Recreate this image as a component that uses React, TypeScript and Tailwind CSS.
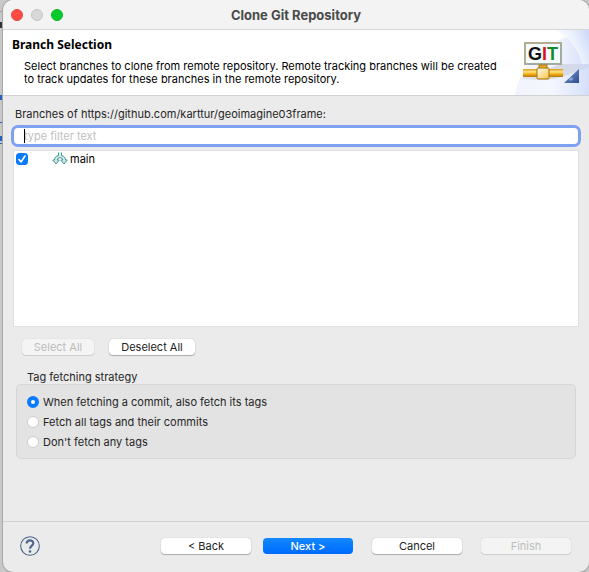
import { useState, type ReactNode } from "react";

function Backdrop() {
  return (
    <svg className="absolute inset-0 h-full w-full" aria-hidden="true">
      <rect width="100%" height="100%" fill="#c8c8c8" />
      <rect x="13" width="10" height="2" fill="#2b4a94" />
      <rect x="43" width="9" height="2" fill="#b03040" />
      <rect x="71" width="14" height="2" fill="#c9a13c" />
      <rect x="95" width="9" height="2" fill="#c9a13c" />
      <rect x="562" width="11" height="1" fill="#555555" />
      <rect y="11" width="3" height="1" fill="#999999" />
      <rect y="22" width="2" height="6" fill="#333333" />
      <rect y="95" width="2" height="5" fill="#2a5fc0" />
      <rect y="122" width="3" height="1" fill="#2a5fc0" />
      <rect y="136" width="2" height="5" fill="#2a5fc0" />
      <rect y="143" width="3" height="1" fill="#2a5fc0" />
    </svg>
  );
}

function GitBanner() {
  return (
    <svg width="76" height="65" viewBox="0 0 76 65" className="shrink-0" aria-label="Git" role="img">
      <defs>
        <linearGradient id="glow" x1="0" y1="0.4" x2="1" y2="0">
          <stop offset="0" stopColor="#ffffff" />
          <stop offset="0.5" stopColor="#eef2fd" />
          <stop offset="1" stopColor="#ccd8f9" />
        </linearGradient>
        <linearGradient id="glowLow" x1="0" y1="0" x2="1" y2="0">
          <stop offset="0" stopColor="#f1f4fd" />
          <stop offset="0.5" stopColor="#f5f7fe" />
          <stop offset="1" stopColor="#d5dffa" />
        </linearGradient>
        <linearGradient id="shade" x1="0" y1="0" x2="1" y2="0">
          <stop offset="0" stopColor="#e2e3e8" />
          <stop offset="0.5" stopColor="#d2d4dc" />
          <stop offset="1" stopColor="#cfd8ef" />
        </linearGradient>
        <linearGradient id="pipe" x1="0" y1="0" x2="0" y2="1">
          <stop offset="0" stopColor="#d79a10" />
          <stop offset="0.35" stopColor="#ffe48a" />
          <stop offset="0.6" stopColor="#f2b51c" />
          <stop offset="1" stopColor="#b87606" />
        </linearGradient>
        <linearGradient id="node" x1="0" y1="0" x2="1" y2="1">
          <stop offset="0" stopColor="#fffdf0" />
          <stop offset="1" stopColor="#f5c444" />
        </linearGradient>
        <linearGradient id="corner" x1="0" y1="0" x2="1" y2="1">
          <stop offset="0" stopColor="#7d9bd0" />
          <stop offset="1" stopColor="#2c4c91" />
        </linearGradient>
      </defs>
      <path d="M2 65C6 40 26 10 76 0V65Z" fill="url(#glowLow)" />
      <path d="M42 0C58 8 66 20 69 34H76V0Z" fill="url(#glow)" />
      <path d="M6 49L48 34H76V37C62 42 45 50 28 50Z" fill="url(#shade)" opacity="0.8" />
      <rect x="12" y="13" width="36" height="21" fill="#f5faff" stroke="#b3ad90" strokeWidth="2" />
      <path d="M12 34H48V14" fill="none" stroke="#8faab3" strokeWidth="1" />
      <text
        x="30"
        y="30"
        textAnchor="middle"
        fontFamily="Liberation Sans, Arial, sans-serif"
        fontSize="18"
        fontWeight="700"
      >
        <tspan fill="#111111">G</tspan>
        <tspan fill="#d8131b">I</tspan>
        <tspan fill="#15882a">T</tspan>
      </text>
      <rect x="26" y="35" width="8" height="4" fill="#e5ac25" stroke="#ad7510" strokeWidth="1" />
      <rect x="10" y="39" width="40" height="8" fill="url(#pipe)" />
      <rect x="24" y="38" width="12" height="11" rx="1" fill="url(#node)" stroke="#aa700c" strokeWidth="1" />
      <path d="M66 39V53H51Z" fill="url(#corner)" />
      <path d="M58 51V47M56 50L60 48M60 50L56 48" stroke="#9fb6e0" strokeWidth="0.7" />
    </svg>
  );
}

function BranchIcon() {
  return (
    <svg width="16" height="14" viewBox="0 0 16 14" fill="none" aria-hidden="true">
      <path
        d="M6.500 0.500V3.500C4 4 2.500 5.500 2.500 8H0.800L4 12L7.200 8H5.300C5.300 6.500 6.500 5.700 8 5.700C9.500 5.700 10.700 6.500 10.700 8H8.800L12 12L15.200 8H13.500C13.500 5.500 12 4 9.500 3.500V0.500"
        fill="#c9ebe7"
        stroke="#4a9498"
        strokeWidth="1"
        strokeLinejoin="round"
      />
      <path d="M8 0.500V4.500" stroke="#eafaf8" strokeWidth="1" />
    </svg>
  );
}

type Variant = "normal" | "primary" | "disabled";

const variants: Record<Variant, string> = {
  normal: "bg-white text-[#222222] shadow-[0_0_1px_rgba(0,0,0,0.3),0_1px_1px_rgba(0,0,0,0.25)]",
  primary: "bg-linear-to-b from-[#1487ff] to-[#006aff] font-medium text-white",
  disabled: "bg-[#f4f4f4] text-[#bcbcbc] shadow-[0_0_1px_rgba(0,0,0,0.2),0_1px_1px_rgba(0,0,0,0.1)]",
};

function PushButton({ variant = "normal", width, children }: { variant?: Variant; width: string; children: ReactNode }) {
  return (
    <button
      type="button"
      disabled={variant === "disabled"}
      className={`flex h-4 items-center justify-center rounded ${width} ${variants[variant]}`}
    >
      {children}
    </button>
  );
}

const strategies = [
  "When fetching a commit, also fetch its tags",
  "Fetch all tags and their commits",
  "Don't fetch any tags",
];

export default function App() {
  const [filter, setFilter] = useState("");
  const [strategy, setStrategy] = useState(0);
  const [checked, setChecked] = useState(true);

  return (
    <div className="relative min-h-screen pl-[3px] font-['Inter',sans-serif] text-[11px] leading-[14px] text-[#262626]">
      <Backdrop />
      <div className="relative flex min-h-screen flex-col overflow-hidden rounded-[10px] bg-[#ebebeb] shadow-[0_0_0_1px_#a8a8a8]">
        <header className="grid h-[30px] grid-cols-[1fr_auto_1fr] items-center border-b border-[#d6d6d6] bg-[#f3f3f3]">
          <div className="flex gap-2 pl-2">
            <button type="button" aria-label="Close" className="size-3 rounded-full border border-[#e2443f] bg-[#ff4a45]" />
            <button type="button" aria-label="Minimize" className="size-3 rounded-full border border-[#c4c4c4] bg-[#d8d8d8]" />
            <button type="button" aria-label="Zoom" className="size-3 rounded-full border border-[#0bb526] bg-[#06cb2c]" />
          </div>
          <h1 className="text-[13px] font-bold text-[#4a4a4a]">Clone Git Repository</h1>
        </header>

        <section className="flex h-[66px] justify-between border-b border-[#d2d2d2] bg-white text-black">
          <div className="pt-[7px] pl-[9px]">
            <h2 className="font-['Noto_Sans','Open_Sans',sans-serif] text-[12px] leading-4 font-bold">Branch Selection</h2>
            <p className="pt-[7px] pl-3 leading-[13px] whitespace-nowrap">
              Select branches to clone from remote repository. Remote tracking branches will be created
              <br />
              to track updates for these branches in the remote repository.
            </p>
          </div>
          <GitBanner />
        </section>

        <main className="flex flex-1 flex-col px-[10px] pt-[11px]">
          <label htmlFor="filter" className="px-[2px]">
            Branches of https://github.com/karttur/geoimagine03frame:
          </label>
          <div className="relative mx-px mt-[7px] flex">
            <input
              id="filter"
              type="text"
              value={filter}
              onChange={(e) => setFilter(e.target.value)}
              placeholder="type filter text"
              className="h-4 w-full rounded bg-white pr-2 pl-[10px] ring-3 ring-[#7f9ff0] outline-none placeholder:text-[#bfbfbf]"
            />
            <span className="absolute top-px left-[10px] h-[14px] w-px bg-black" aria-hidden="true" />
          </div>

          <div className="mt-[6px] h-[177px] border border-[#e0e0e0] bg-white text-black">
            <label className="flex h-4 items-center px-[2px]">
              <span className="grid size-3">
                <input
                  type="checkbox"
                  checked={checked}
                  onChange={(e) => setChecked(e.target.checked)}
                  className="col-start-1 row-start-1 size-3 appearance-none rounded-[3px] border border-[#b5b5b5] bg-white checked:border-[#0a7aff] checked:bg-[#0a7aff]"
                />
                <svg viewBox="0 0 12 12" className="pointer-events-none col-start-1 row-start-1 size-3" fill="none" aria-hidden="true">
                  <path d="M3 6.500L5 9L9 3" stroke="white" strokeWidth="1.600" strokeLinecap="round" strokeLinejoin="round" />
                </svg>
              </span>
              <span className="flex items-center gap-[2px] pl-6">
                <BranchIcon />
                main
              </span>
            </label>
          </div>

          <div className="flex gap-[15px] px-[9px] pt-3">
            <PushButton variant="disabled" width="w-[72px]">Select All</PushButton>
            <PushButton width="w-[86px]">Deselect All</PushButton>
          </div>

          <fieldset className="mx-[3px] mt-[15px] mb-6">
            <legend className="pl-[11px]">Tag fetching strategy</legend>
            <div className="flex flex-col gap-[6px] rounded-[5px] border border-[#d6d6d6] bg-[#e3e3e3] px-[10px] pt-[10px] pb-[9px]">
              {strategies.map((label, i) => (
                <label key={label} className="flex items-center gap-1">
                  <input
                    type="radio"
                    name="strategy"
                    checked={strategy === i}
                    onChange={() => setStrategy(i)}
                    className="size-3 appearance-none rounded-full border border-[#cccccc] bg-white checked:border-4 checked:border-[#0a7aff]"
                  />
                  {label}
                </label>
              ))}
            </div>
          </fieldset>
        </main>

        <footer className="flex h-[51px] items-center justify-between border-t border-[#d0d0d0] px-[17px] pb-[2px]">
          <button type="button" aria-label="Help" className="size-5">
            <svg viewBox="0 0 20 20" fill="none" aria-hidden="true">
              <circle cx="10" cy="10" r="9.300" stroke="#4d658f" strokeWidth="1.100" />
              <path d="M6.700 7.600C6.700 3.300 13.300 3.300 13.300 7.200C13.300 9.700 10 9.600 10 12.800" stroke="#4d658f" strokeWidth="2.200" />
              <circle cx="10" cy="15.500" r="1.300" fill="#4d658f" />
            </svg>
          </button>
          <div className="flex items-center pr-px">
            <PushButton width="w-[90px]">&lt; Back</PushButton>
            <div className="px-3">
              <PushButton variant="primary" width="w-[90px]">Next &gt;</PushButton>
            </div>
            <div className="flex gap-[19px] pl-[7px]">
              <PushButton width="w-[90px]">Cancel</PushButton>
              <PushButton variant="disabled" width="w-[90px]">Finish</PushButton>
            </div>
          </div>
        </footer>
      </div>
    </div>
  );
}
